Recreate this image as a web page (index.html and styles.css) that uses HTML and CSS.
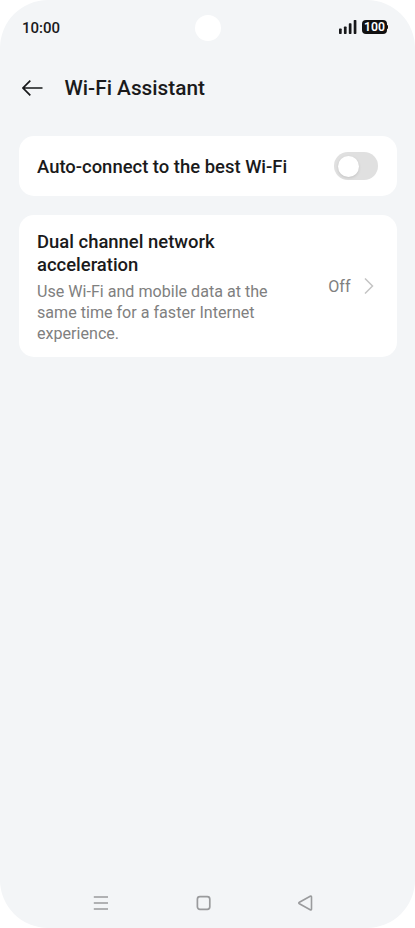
FILE: index.html
```html
<!DOCTYPE html>
<html lang="en">
<head>
<meta charset="utf-8">
<title>Wi-Fi Assistant</title>
<link rel="stylesheet" href="styles.css">
</head>
<body>
<div class="phone">
  <header class="status">
    <span class="time">10:00</span>
    <span class="camera"></span>
    <span class="indicators">
      <svg class="signal" width="18" height="14" viewBox="0 0 18 14" fill="#17181a"><rect x="0" y="8.500" width="2.700" height="5.500" rx=".7"/><rect x="4.900" y="6.500" width="2.700" height="7.500" rx=".7"/><rect x="9.800" y="3.300" width="2.700" height="10.700" rx=".7"/><rect x="14.700" y="0" width="2.700" height="14" rx=".7"/></svg>
      <span class="battery">100</span>
    </span>
  </header>
  <div class="titlebar">
    <svg class="back" width="22" height="18" viewBox="0 0 22 18" fill="none" stroke="#17181a" stroke-width="1.700"><path d="M8.300 1.700 1 9l7.300 7.300M1 9H20.500"/></svg>
    <h1>Wi-Fi Assistant</h1>
  </div>
  <main>
    <section class="card auto">
      <h2>Auto-connect to the best Wi-Fi</h2>
      <span class="toggle"></span>
    </section>
    <section class="card dual">
      <div class="copy">
        <h2>Dual channel network<br>acceleration</h2>
        <p>Use Wi-Fi and mobile data at the<br>same time for a faster Internet<br>experience.</p>
      </div>
      <span class="value">Off</span>
      <svg class="chevron" width="10" height="16" viewBox="0 0 10 16" fill="none" stroke="#c4c4c4" stroke-width="1.500"><path d="M1 .5 8.500 8 1 15.500"/></svg>
    </section>
  </main>
  <nav>
    <svg width="16" height="16" viewBox="0 0 16 16" fill="none" stroke="#9a9b9d" stroke-width="1.700"><path d="M.8 2h14.200M.8 8h14.200M.8 14h14.200"/></svg>
    <svg width="16" height="16" viewBox="0 0 16 16" fill="none" stroke="#9a9b9d" stroke-width="1.700"><rect x="2.400" y="1.700" width="12.400" height="12.600" rx="2.500"/></svg>
    <svg width="16" height="16" viewBox="0 0 16 16" fill="none" stroke="#9a9b9d" stroke-width="1.600" stroke-linejoin="round"><path d="M13.200 1.300Q14.500.8 14.500 2v12q0 1.200-1.300.7L2.400 8.800q-1.300-.8 0-1.600z"/></svg>
  </nav>
</div>
</body>
</html>
```

FILE: styles.css
```css
* { box-sizing: border-box; }
body { margin: 0; background: #fff; font-family: Roboto, sans-serif; color: #1a1a1b; }
h1, h2, p { margin: 0; font-weight: 500; white-space: nowrap; }
.phone { width: 415px; height: 928px; border-radius: 48px; background: #f3f5f7; display: flex; flex-direction: column; }
.status { height: 55px; padding: 0 28px 0 22px; display: grid; grid-template-columns: 172.5px 26px 1fr; align-items: center; }
.time { font-size: 15px; font-weight: 500; }
.camera { width: 26px; height: 26px; border-radius: 50%; background: #fff; }
.indicators { display: flex; justify-content: flex-end; align-items: center; gap: 5.5px; margin-top: -1px; }
.battery { position: relative; width: 25px; height: 14px; border-radius: 4px; background: #111; color: #fff; font-size: 12.2px; line-height: 15px; font-weight: 600; text-align: center; }
.battery::after { content: ""; position: absolute; right: -1px; top: 5px; width: 2px; height: 4px; border-radius: 1px; background: #111; }
.titlebar { height: 66px; padding-left: 21.5px; display: flex; align-items: center; gap: 21px; }
h1 { font-size: 20.8px; line-height: 26px; }
main { padding: 15px 18px 0 18.5px; flex: 1; }
.card { background: #fff; border-radius: 15px; display: flex; align-items: center; padding: 0 19px 0 18.5px; }
.auto { height: 60px; justify-content: space-between; margin-bottom: 19px; }
.auto h2 { padding-top: 2px; }
h2 { font-size: 18.45px; line-height: 23px; }
.toggle { width: 44px; height: 28px; border-radius: 14px; background: #e0e0e0; display: flex; align-items: center; padding-left: 3.5px; }
.toggle::before { content: ""; width: 21px; height: 21px; border-radius: 50%; background: #fff; box-shadow: 0 1px 3px #0002; }
.dual { height: 141.5px; padding-right: 23px; }
.copy { flex: 1; padding-top: 3.5px; }
.copy p { font-size: 16.1px; line-height: 21px; font-weight: 400; color: #808080; margin-top: 3.5px; }
.value { font-size: 16.1px; color: #808080; margin-right: 13.5px; padding-top: 1.5px; }
nav { height: 51px; padding: 0 102px 0 93px; display: flex; align-items: center; justify-content: space-between; }
```
